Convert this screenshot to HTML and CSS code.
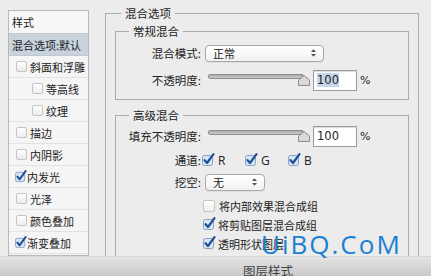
FILE: index.html
```html
<!DOCTYPE html>
<html lang="zh">
<head>
    <meta charset="UTF-8">
    <title>图层样式</title>
    <link rel="stylesheet" href="styles.css">
</head>
<body>
    <div class="dialog">
        <div class="content">
            <!-- Lista de estilos -->
            <div class="sidebar">
                <div class="side-head">样式</div>
                <div class="side-item active">混合选项:默认</div>
                <div class="side-item"><span class="cb"></span>斜面和浮雕</div>
                <div class="side-item sub"><span class="cb"></span>等高线</div>
                <div class="side-item sub"><span class="cb"></span>纹理</div>
                <div class="side-item"><span class="cb"></span>描边</div>
                <div class="side-item"><span class="cb"></span>内阴影</div>
                <div class="side-item"><svg class="cb-on" viewBox="0 0 13 13"><rect x="0.5" y="2.5" width="10" height="10" rx="2" fill="#d8e5f4" stroke="#88a2c4"/><path d="M2.6 7.2 L5 10 L11.5 1.2" fill="none" stroke="#1e4f95" stroke-width="2.2" stroke-linecap="round" stroke-linejoin="round"/></svg>内发光</div>
                <div class="side-item"><span class="cb"></span>光泽</div>
                <div class="side-item"><span class="cb"></span>颜色叠加</div>
                <div class="side-item"><svg class="cb-on" viewBox="0 0 13 13"><rect x="0.5" y="2.5" width="10" height="10" rx="2" fill="#d8e5f4" stroke="#88a2c4"/><path d="M2.6 7.2 L5 10 L11.5 1.2" fill="none" stroke="#1e4f95" stroke-width="2.2" stroke-linecap="round" stroke-linejoin="round"/></svg>渐变叠加</div>
                <div class="side-item"><span class="cb"></span>图案叠加</div>
            </div>

            <!-- Opciones de mezcla -->
            <div class="main">
                <fieldset class="group outer">
                    <legend>混合选项</legend>
                    <fieldset class="group first">
                        <legend>常规混合</legend>
                        <div class="form">
                            <label>混合模式:</label>
                            <div class="select wide">
                                <span>正常</span>
                                <svg class="arrows" viewBox="0 0 6 9"><path d="M3 0 L6 3.4 H0 Z M3 9 L6 5.6 H0 Z" fill="#555"/></svg>
                            </div>
                            <label class="row-gap">不透明度:</label>
                            <div class="slider-row row-gap">
                                <div class="slider">
                                    <div class="track"></div>
                                    <svg class="thumb" viewBox="0 0 12 11"><path d="M0.5 10.5 V5 L6 0.5 L11.5 5 V10.5 Z" fill="#d9d9d9" stroke="#8a8a8a"/></svg>
                                </div>
                                <div class="num"><span class="selected">100</span></div>
                                <span class="pct">%</span>
                            </div>
                        </div>
                    </fieldset>
                    <fieldset class="group second">
                        <legend>高级混合</legend>
                        <div class="form">
                            <label>填充不透明度:</label>
                            <div class="slider-row">
                                <div class="slider">
                                    <div class="track"></div>
                                    <svg class="thumb" viewBox="0 0 12 11"><path d="M0.5 10.5 V5 L6 0.5 L11.5 5 V10.5 Z" fill="#d9d9d9" stroke="#8a8a8a"/></svg>
                                </div>
                                <div class="num"><span>100</span></div>
                                <span class="pct">%</span>
                            </div>
                            <label class="channel-gap">通道:</label>
                            <div class="channels channel-gap">
                                <span class="chan"><svg class="cb-on" viewBox="0 0 13 13"><rect x="0.5" y="2.5" width="10" height="10" rx="2" fill="#d8e5f4" stroke="#88a2c4"/><path d="M2.6 7.2 L5 10 L11.5 1.2" fill="none" stroke="#1e4f95" stroke-width="2.2" stroke-linecap="round" stroke-linejoin="round"/></svg>R</span>
                                <span class="chan"><svg class="cb-on" viewBox="0 0 13 13"><rect x="0.5" y="2.5" width="10" height="10" rx="2" fill="#d8e5f4" stroke="#88a2c4"/><path d="M2.6 7.2 L5 10 L11.5 1.2" fill="none" stroke="#1e4f95" stroke-width="2.2" stroke-linecap="round" stroke-linejoin="round"/></svg>G</span>
                                <span class="chan"><svg class="cb-on" viewBox="0 0 13 13"><rect x="0.5" y="2.5" width="10" height="10" rx="2" fill="#d8e5f4" stroke="#88a2c4"/><path d="M2.6 7.2 L5 10 L11.5 1.2" fill="none" stroke="#1e4f95" stroke-width="2.2" stroke-linecap="round" stroke-linejoin="round"/></svg>B</span>
                            </div>
                            <label class="knock-gap">挖空:</label>
                            <div class="select small knock-gap">
                                <span>无</span>
                                <svg class="arrows" viewBox="0 0 6 9"><path d="M3 0 L6 3.4 H0 Z M3 9 L6 5.6 H0 Z" fill="#555"/></svg>
                            </div>
                        </div>
                        <div class="checks">
                            <div class="check"><span class="cb big"></span>将内部效果混合成组</div>
                            <div class="check"><svg class="cb-on big" viewBox="0 0 13 13"><rect x="0.5" y="2.5" width="10" height="10" rx="2" fill="#d8e5f4" stroke="#88a2c4"/><path d="M2.6 7.2 L5 10 L11.5 1.2" fill="none" stroke="#1e4f95" stroke-width="2.2" stroke-linecap="round" stroke-linejoin="round"/></svg>将剪贴图层混合成组</div>
                            <div class="check"><svg class="cb-on big" viewBox="0 0 13 13"><rect x="0.5" y="2.5" width="10" height="10" rx="2" fill="#d8e5f4" stroke="#88a2c4"/><path d="M2.6 7.2 L5 10 L11.5 1.2" fill="none" stroke="#1e4f95" stroke-width="2.2" stroke-linecap="round" stroke-linejoin="round"/></svg>透明形状图层</div>
                            <div class="check"><span class="cb big"></span>图层蒙版隐藏效果</div>
                        </div>
                    </fieldset>
                </fieldset>
            </div>
        </div>
        <div class="footer">图层样式</div>
        <div class="watermark">UiBQ.CoM</div>
    </div>
</body>
</html>
```

FILE: styles.css
```css
/* Base */
body {
    margin: 0;
    width: 431px;
    height: 276px;
    overflow: hidden;
    background: #ececec;
    color: #222;
    font-family: "Noto Sans CJK SC", "Noto Sans", sans-serif;
    font-size: 11px;
}

.dialog {
    position: relative;
    display: flex;
    flex-direction: column;
    height: 100%;
}

.content {
    flex: 1;
    min-height: 0;
    display: flex;
    padding: 5px 0 0 8px;
    overflow: hidden;
}

/* Lista lateral */
.sidebar {
    width: 79px;
    flex-shrink: 0;
    margin-top: 5px;
    border: 1px solid #b9b9b9;
    background: #f5f5f5;
}

.side-head {
    height: 22px;
    line-height: 22px;
    padding-left: 3px;
    border-bottom: 1px solid #c9c9c9;
    background: #f7f7f7;
}

.side-item {
    height: 21px;
    display: flex;
    align-items: center;
    padding-left: 7px;
    border-bottom: 1px solid #e2e2e2;
    white-space: nowrap;
}

.side-item.active {
    padding-left: 3px;
    background: #c9d3de;
    border-bottom-color: #c0c8d2;
}

.side-item.sub {
    padding-left: 23px;
}

.cb {
    display: inline-block;
    width: 9px;
    height: 9px;
    margin-right: 3px;
    border: 1px solid #c4c4c4;
    border-radius: 2px;
    background: linear-gradient(#ffffff, #ececec);
}

.cb-on {
    width: 12px;
    height: 12px;
    margin: -2px 0 0 -1px;
    flex-shrink: 0;
}

.cb.big {
    width: 10px;
    height: 10px;
    margin-right: 4px;
}

.cb-on.big {
    width: 13px;
    height: 13px;
    margin: -2px 2px 0 0;
}

/* Panel principal */
.main {
    margin-left: 16px;
    width: 314px;
}

.group {
    margin: 0;
    border: 1px solid #acacac;
    padding: 0;
    min-width: 0;
}

.group legend {
    padding: 0 4px;
    line-height: 16px;
    font-size: 11.5px;
}

.outer {
    border-bottom: none;
    padding: 2px 9px 0 9px;
    height: 300px;
}

.outer > legend {
    margin-left: 6px;
}

.first > legend,
.second > legend {
    margin-left: 13px;
}

.first {
    padding: 4px 0 9px;
}

.second {
    margin-top: 7px;
    padding: 3px 0 20px;
}

.form {
    display: grid;
    grid-template-columns: 85px auto;
    column-gap: 4px;
    align-items: center;
}

.form label {
    text-align: right;
    font-size: 11.5px;
    white-space: nowrap;
    height: 20px;
    line-height: 20px;
}

.row-gap {
    margin-top: 7px;
}

.channel-gap {
    margin-top: 4px;
}

.knock-gap {
    margin-top: 2px;
}

.select {
    height: 15px;
    display: flex;
    align-items: center;
    justify-content: space-between;
    padding: 0 7px 0 7px;
    border: 1px solid #a8a8a8;
    border-radius: 4px;
    background: linear-gradient(#ffffff, #f1f1f1);
    box-shadow: 0 1px 0 rgba(0, 0, 0, 0.05);
}

.select.wide {
    width: 103px;
}

.select.small {
    width: 44px;
}

.arrows {
    width: 5px;
    height: 8px;
}

/* Deslizadores */
.slider-row {
    display: flex;
    align-items: center;
    height: 20px;
}

.slider {
    display: flex;
    align-items: flex-start;
    width: 104px;
    height: 12px;
    margin-left: 3px;
}

.track {
    width: 94px;
    height: 3px;
    border: 1px solid #8e8e8e;
    border-radius: 2px;
    background: linear-gradient(#a9a9a9, #cdcdcd);
}

.thumb {
    width: 12px;
    height: 11px;
    margin-left: -6px;
    margin-top: 1px;
}

.num {
    box-sizing: border-box;
    width: 44px;
    height: 21px;
    margin-left: 1px;
    padding-left: 3px;
    border: 1px solid #9c9c9c;
    background: #fff;
    box-shadow: inset 0 1px 1px rgba(0, 0, 0, 0.15);
    font-family: "DejaVu Sans", sans-serif;
    font-size: 11.5px;
    line-height: 19px;
}

.num .selected {
    background: #c5d5eb;
}

.pct {
    margin-left: 3px;
    font-family: "DejaVu Sans", sans-serif;
    font-size: 11px;
}

.channels {
    display: flex;
    align-items: center;
    height: 20px;
    margin-left: -2px;
    font-family: "Open Sans", sans-serif;
    font-size: 12px;
}

.chan {
    display: flex;
    align-items: center;
    width: 43px;
}

.chan .cb-on {
    width: 13px;
    height: 13px;
    margin-right: 3px;
}

.checks {
    margin: 4px 0 0 87px;
}

.check {
    height: 19px;
    display: flex;
    align-items: center;
    white-space: nowrap;
}

/* Barra inferior */
.footer {
    height: 19px;
    flex-shrink: 0;
    padding-left: 243px;
    line-height: 27px;
    font-size: 12.5px;
    color: #444;
    background: linear-gradient(rgba(226, 226, 226, 0.85), #c9c9c9);
    border-top: 1px solid #d6d6d6;
    overflow: hidden;
}

.watermark {
    position: absolute;
    left: 261px;
    top: 226px;
    font-family: "Open Sans", sans-serif;
    font-size: 26px;
    letter-spacing: 2px;
    color: #1b7fd3;
}
```
